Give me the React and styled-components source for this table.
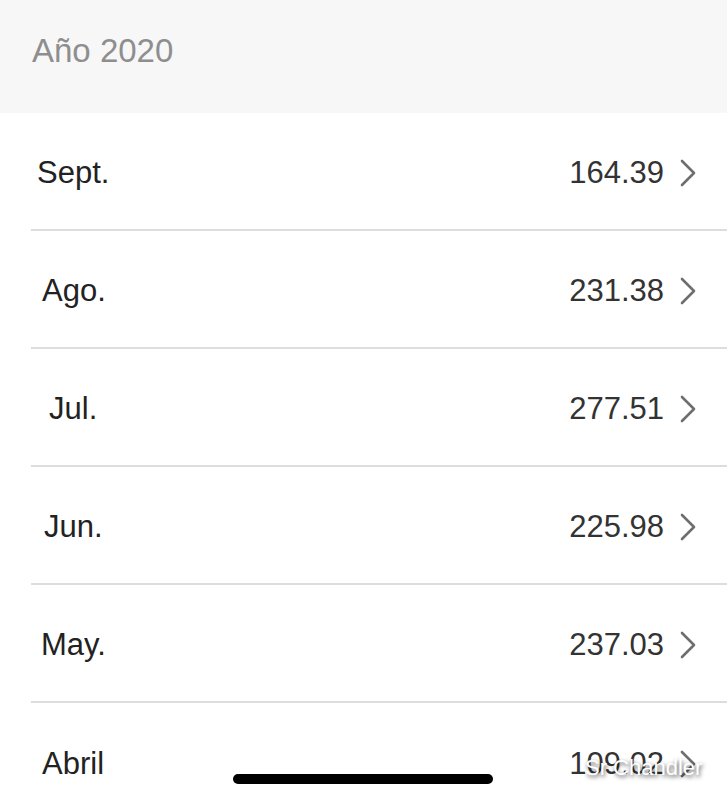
import React from "react";
import styled, { createGlobalStyle } from "styled-components";

const GlobalStyle = createGlobalStyle`
  html, body {
    margin: 0;
    padding: 0;
    background: #ffffff;
    font-family: "Liberation Sans", Arial, sans-serif;
    overflow: hidden;
  }
`;

const Screen = styled.div`
  position: relative;
  width: 727px;
  height: 800px;
  overflow: hidden;
  background: #ffffff;
`;

const SectionHeader = styled.div`
  height: 113px;
  background: #f7f7f7;
  display: flex;
  align-items: center;
  padding-left: 32px;
  padding-bottom: 12px;
  box-sizing: border-box;
  color: #8e8e8e;
  font-size: 33px;
`;

const List = styled.div`
  display: flex;
  flex-direction: column;
`;

const Row = styled.div`
  height: 118px;
  display: flex;
  align-items: center;
  margin-left: 31px;
  padding-right: 31px;
  padding-top: 3px;
  border-bottom: 2px solid #dddddd;
  box-sizing: border-box;
  &:last-child {
    border-bottom: none;
  }
`;

const Month = styled.span`
  flex: 1;
  padding-left: ${(p) => p.$indent}px;
  color: #222222;
  font-size: 31px;
`;

const Amount = styled.span`
  color: #333333;
  font-size: 31px;
  margin-right: 16px;
`;

const Chevron = styled.svg`
  width: 16px;
  height: 28px;
  flex-shrink: 0;
`;

const HomeIndicator = styled.div`
  position: absolute;
  left: 233px;
  top: 774px;
  width: 260px;
  height: 10px;
  border-radius: 5px;
  background: #000000;
`;

const Watermark = styled.div`
  position: absolute;
  left: 585px;
  top: 755px;
  color: #ffffff;
  font-size: 22px;
  text-shadow: 1px 2px 4px rgba(0, 0, 0, 0.7);
`;

const months = [
  { name: "Sept.", value: "164.39", indent: 6 },
  { name: "Ago.", value: "231.38", indent: 11 },
  { name: "Jul.", value: "277.51", indent: 18 },
  { name: "Jun.", value: "225.98", indent: 13 },
  { name: "May.", value: "237.03", indent: 10 },
  { name: "Abril", value: "109.02", indent: 11 },
];

function App() {
  return (
    <Screen>
      <GlobalStyle />
      <SectionHeader>Año 2020</SectionHeader>
      <List>
        {months.map((m) => (
          <Row key={m.name}>
            <Month $indent={m.indent}>{m.name}</Month>
            <Amount>{m.value}</Amount>
            <Chevron viewBox="0 0 16 28">
              <path
                d="M2 2 L14 14 L2 26"
                fill="none"
                stroke="#6e6e6e"
                strokeWidth="2.6"
                strokeLinecap="round"
                strokeLinejoin="round"
              />
            </Chevron>
          </Row>
        ))}
      </List>
      <HomeIndicator />
      <Watermark>Sr Chandler</Watermark>
    </Screen>
  );
}

export default App;
